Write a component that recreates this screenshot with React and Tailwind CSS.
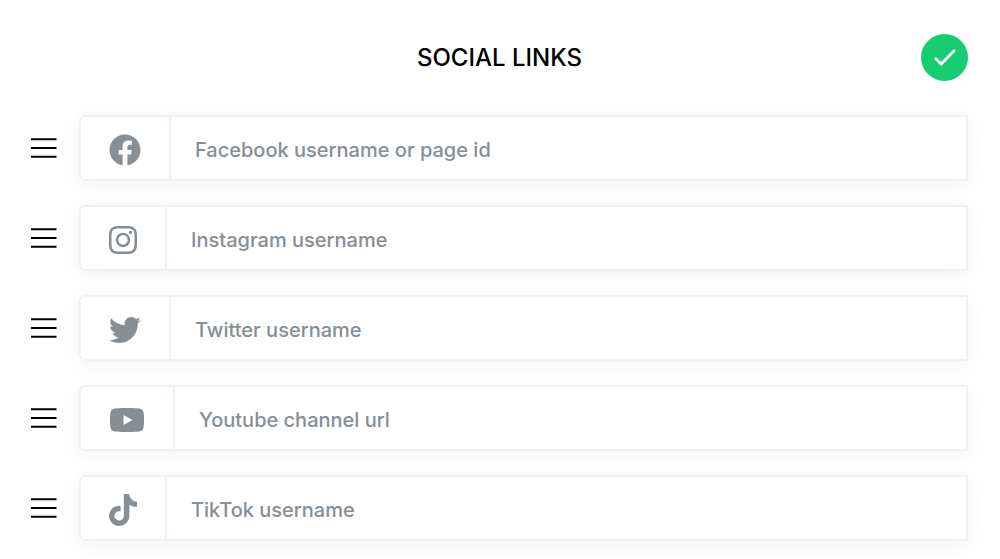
import { FaFacebook, FaInstagram, FaTwitter, FaYoutube, FaTiktok } from 'react-icons/fa';

const links = [
  { id: 'facebook', placeholder: 'Facebook username or page id', Icon: FaFacebook, iconWidth: 'w-8' },
  { id: 'instagram', placeholder: 'Instagram username', Icon: FaInstagram, iconWidth: 'w-7' },
  { id: 'twitter', placeholder: 'Twitter username', Icon: FaTwitter, iconWidth: 'w-8' },
  { id: 'youtube', placeholder: 'Youtube channel url', Icon: FaYoutube, iconWidth: 'w-9' },
  { id: 'tiktok', placeholder: 'TikTok username', Icon: FaTiktok, iconWidth: 'w-7' }
];

function Header() {
  return (
    <header className="grid grid-cols-[1fr_auto_1fr] items-center">
      <h1 className="col-start-2 text-2xl font-medium text-black">SOCIAL LINKS</h1>
      <button
        type="submit"
        aria-label="Save"
        className="flex size-[47px] items-center justify-center justify-self-end rounded-full bg-[#17cd72] text-white"
      >
        <svg width="24" height="24" viewBox="0 0 24 24" fill="none">
          <path d="M2.8 12.8l5.4 5.2L21.1 4.8" stroke="currentColor" strokeWidth="2.8" strokeLinecap="round" />
        </svg>
      </button>
    </header>
  );
}

function LinkRow({ id, placeholder, Icon, iconWidth }) {
  return (
    <li className="flex items-center gap-[22px]">
      {/* Drag handle */}
      <button type="button" aria-label="Reorder" className="cursor-grab text-black">
        <svg width="26" height="22" viewBox="0 0 26 22" fill="none">
          <path d="M0 2.2h25.5M0 11h25.5M0 19.8h25.5" stroke="currentColor" strokeWidth="2" />
        </svg>
      </button>

      <div className="flex h-[66px] flex-1 rounded-l-md border-2 border-[#f0f0fa] shadow-[0_4px_20px_rgba(0,0,0,0.05)]">
        <label
          htmlFor={id}
          aria-label={placeholder}
          className="flex items-center border-r-2 border-[#f0f0fa] px-7 pt-1 text-[#868e96]"
        >
          <Icon className={`h-8 ${iconWidth}`} />
        </label>
        <input
          id={id}
          type="text"
          placeholder={placeholder}
          className="min-w-0 flex-1 px-6 pt-1 text-xl font-medium text-[#495057] placeholder:text-[#868e96] focus:outline-none"
        />
      </div>
    </li>
  );
}

export default function App() {
  return (
    <form
      className="bg-white pt-[34px] pr-8 pb-4 pl-[31px] font-['Inter',sans-serif]"
      onSubmit={(e) => e.preventDefault()}
    >
      <Header />
      <ul className="mt-[34px] flex flex-col gap-6">
        {links.map((link) => (
          <LinkRow key={link.id} {...link} />
        ))}
      </ul>
    </form>
  );
}
